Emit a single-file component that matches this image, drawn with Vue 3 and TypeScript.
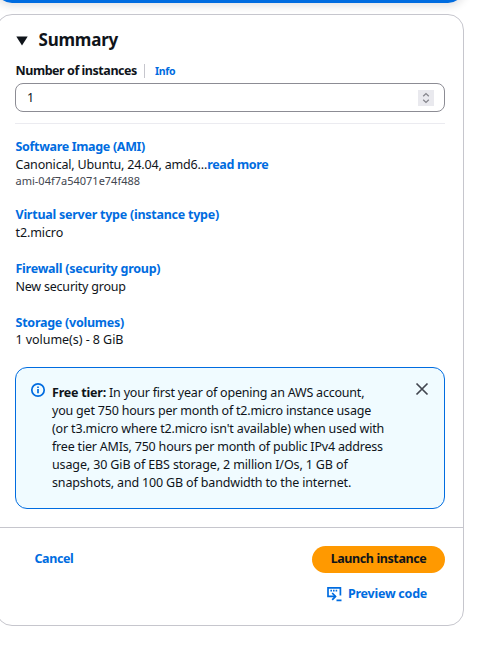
<script setup lang="ts">
import { ref } from 'vue'

interface SummaryItem {
  key: string
  title: string
  value: string
  more?: string
  detail?: string
}

const instances = ref('1')

const items: SummaryItem[] = [
  { key: 'ami', title: 'Software Image (AMI)', value: 'Canonical, Ubuntu, 24.04, amd6...', more: 'read more', detail: 'ami-04f7a54071e74f488' },
  { key: 'type', title: 'Virtual server type (instance type)', value: 't2.micro' },
  { key: 'firewall', title: 'Firewall (security group)', value: 'New security group' },
  { key: 'storage', title: 'Storage (volumes)', value: '1 volume(s) - 8 GiB' },
]
</script>

<template>
  <div class="page">
    <div class="previous-panel"></div>
    <section class="card">
      <div class="body">
        <header class="heading">
          <svg class="caret" width="12" height="10" viewBox="0 0 12 10"><path d="M.3.6h11.4L6 9.6z" fill="#0f141a" /></svg>
          <h2>Summary</h2>
        </header>
        <div class="label-row">
          <label for="count">Number of instances</label>
          <a class="info">Info</a>
        </div>
        <div class="field">
          <input id="count" v-model="instances" type="text" />
          <span class="stepper">
            <svg width="16" height="16" viewBox="0 0 16 16" fill="none" stroke="#85858c" stroke-width="1.3"><path d="M5.2 6.2 8 3.6l2.8 2.6M5.2 9.8 8 12.4l2.8-2.6" /></svg>
          </span>
        </div>
        <dl class="items">
          <div v-for="item in items" :key="item.key" class="item" :class="item.key">
            <dt><a>{{ item.title }}</a></dt>
            <dd><span class="value">{{ item.value }}</span><a v-if="item.more" class="more">{{ item.more }}</a></dd>
            <dd v-if="item.detail" class="detail">{{ item.detail }}</dd>
          </div>
        </dl>
        <aside class="alert">
          <svg class="info-icon" width="16" height="16" viewBox="0 0 16 16" fill="none" stroke="#006ce0" stroke-width="1.7"><circle cx="8" cy="8" r="6.2" /><path d="M8 7.1v4.2M8 4.4v1.5" /></svg>
          <p>
            <span class="l1"><b>Free tier:</b> In your first year of opening an AWS account,</span>
            <span class="l2">you get 750 hours per month of t2.micro instance usage</span>
            <span class="l3">(or t3.micro where t2.micro isn't available) when used with</span>
            <span class="l4">free tier AMIs, 750 hours per month of public IPv4 address</span>
            <span class="l5">usage, 30 GiB of EBS storage, 2 million I/Os, 1 GB of</span>
            <span class="l6">snapshots, and 100 GB of bandwidth to the internet.</span>
          </p>
          <svg class="close" width="14" height="14" viewBox="0 0 14 14" fill="none" stroke="#424650" stroke-width="1.7"><path d="m1.5 1.5 11 11m0-11-11 11" /></svg>
        </aside>
      </div>
      <footer class="footer">
        <a class="cancel">Cancel</a>
        <div class="actions">
          <button class="launch" type="button">Launch instance</button>
          <a class="preview">
            <svg width="15" height="16" viewBox="0 0 15 16" fill="none" stroke="#006ce0"><path d="M8.6 10.4H1V1.8h12.4v7.8" stroke-width="1.7" /><path d="M3.4 4.6h1.6m1 0h1.6m1 0h1.6" stroke-width="1.6" /><path d="m5.2 7 3.3 3.4-3.3 3.4M9.5 14.4h5" stroke-width="1.7" /></svg>
            <span>Preview code</span>
          </a>
        </div>
      </footer>
    </section>
  </div>
</template>

<style>
body {
  margin: 0;
  background: #fff;
}
</style>

<style scoped>
.page {
  box-sizing: border-box;
  width: 500px;
  height: 645px;
  overflow: hidden;
  font-family: 'Noto Sans', 'Open Sans', sans-serif;
  font-size: 12.5px;
  line-height: 18px;
  color: #0f141a;
  white-space: nowrap;
}

.previous-panel {
  width: 468px;
  height: 19px;
  margin: -16px 0 0 -4px;
  box-sizing: border-box;
  border-radius: 0 0 16px 16px;
  background: #006ce0;
  box-shadow: 0 1px 8px 2px rgba(0, 7, 22, 0.12);
}

.card {
  box-sizing: border-box;
  width: 468px;
  height: 612px;
  margin: 11px 0 0 -4px;
  border: 1px solid #c6c6cd;
  border-radius: 16px;
  background: #fff;
}

.body {
  box-sizing: border-box;
  height: 512px;
  padding: 13px 18px 0;
}

.heading {
  display: flex;
  align-items: center;
  height: 24px;
}

.caret {
  margin: 2px 10.5px 0 1px;
}

h2 {
  margin: 0;
  font-size: 17px;
  line-height: 24px;
  letter-spacing: -0.22px;
}

.label-row {
  display: flex;
  align-items: center;
  height: 18px;
  margin-top: 10px;
}

label {
  padding-left: 0.5px;
  letter-spacing: -0.45px;
}

label,
dt,
a,
.launch {
  font-weight: 700;
}

a {
  color: #006ce0;
}

.info {
  margin-left: 7px;
  padding-left: 10px;
  border-left: 1px solid #c6c6cd;
  font-size: 10.5px;
  line-height: 14px;
  letter-spacing: -0.25px;
}

.field {
  display: flex;
  align-items: center;
  box-sizing: border-box;
  height: 29px;
  margin-top: 3px;
  padding: 0 10px 0 11px;
  border: 1px solid #8c8c94;
  border-radius: 8px;
}

input {
  flex: 1;
  min-width: 0;
  padding: 0;
  border: 0;
  outline: 0;
  background: transparent;
  color: #0f141a;
  font: inherit;
}

.stepper {
  display: flex;
  background: #e9e9ee;
}

.items {
  display: grid;
  gap: 18px;
  margin: 11px 0 0;
  padding: 14px 0 0 0.5px;
  border-top: 1px solid #ebebf0;
}

dt {
  letter-spacing: -0.25px;
}

dd {
  margin: 0;
}

.value {
  letter-spacing: -0.17px;
}

.more {
  letter-spacing: -0.33px;
}

.ami dt {
  letter-spacing: -0.33px;
}

.type .value {
  letter-spacing: -0.1px;
}

.firewall .value {
  letter-spacing: -0.22px;
}

.storage .value {
  letter-spacing: -0.05px;
}

.storage dd {
  padding-bottom: 1px;
  line-height: 16px;
}

.detail {
  padding-bottom: 1px;
  font-size: 11px;
  line-height: 13px;
  color: #424650;
}

.alert {
  display: flex;
  align-items: flex-start;
  box-sizing: border-box;
  height: 142px;
  margin-top: 18px;
  padding: 15px 15px 0 14px;
  border: 1px solid #006ce0;
  border-radius: 12px;
  background: #f0fbff;
}

.info-icon {
  margin-top: -1px;
}

.alert p {
  flex: 1;
  display: flex;
  flex-direction: column;
  align-items: flex-start;
  margin: 1px 0 0 6px;
}

.l1 {
  letter-spacing: -0.21px;
}

.l2,
.l4 {
  letter-spacing: -0.2px;
}

.l3,
.l6 {
  letter-spacing: -0.16px;
}

.l5 {
  letter-spacing: -0.13px;
}

.close {
  margin-top: -1px;
}

.footer {
  display: flex;
  justify-content: space-between;
  padding: 18px 18px 0 37.5px;
  border-top: 1px solid #c6c6cd;
}

.cancel {
  margin-top: 4px;
  letter-spacing: -0.42px;
}

.actions {
  display: flex;
  flex-direction: column;
  align-items: flex-end;
}

.launch {
  width: 133px;
  height: 27px;
  padding: 0 0 1px;
  border: 0;
  border-radius: 14px;
  background: #ff9900;
  color: #0f141a;
  font-family: inherit;
  font-size: 12.5px;
  line-height: 18px;
  letter-spacing: -0.4px;
}

.preview {
  display: flex;
  align-items: center;
  gap: 6px;
  margin: 12px 18px 0 0;
  letter-spacing: -0.25px;
}

.preview svg {
  margin-top: -1px;
}
</style>
